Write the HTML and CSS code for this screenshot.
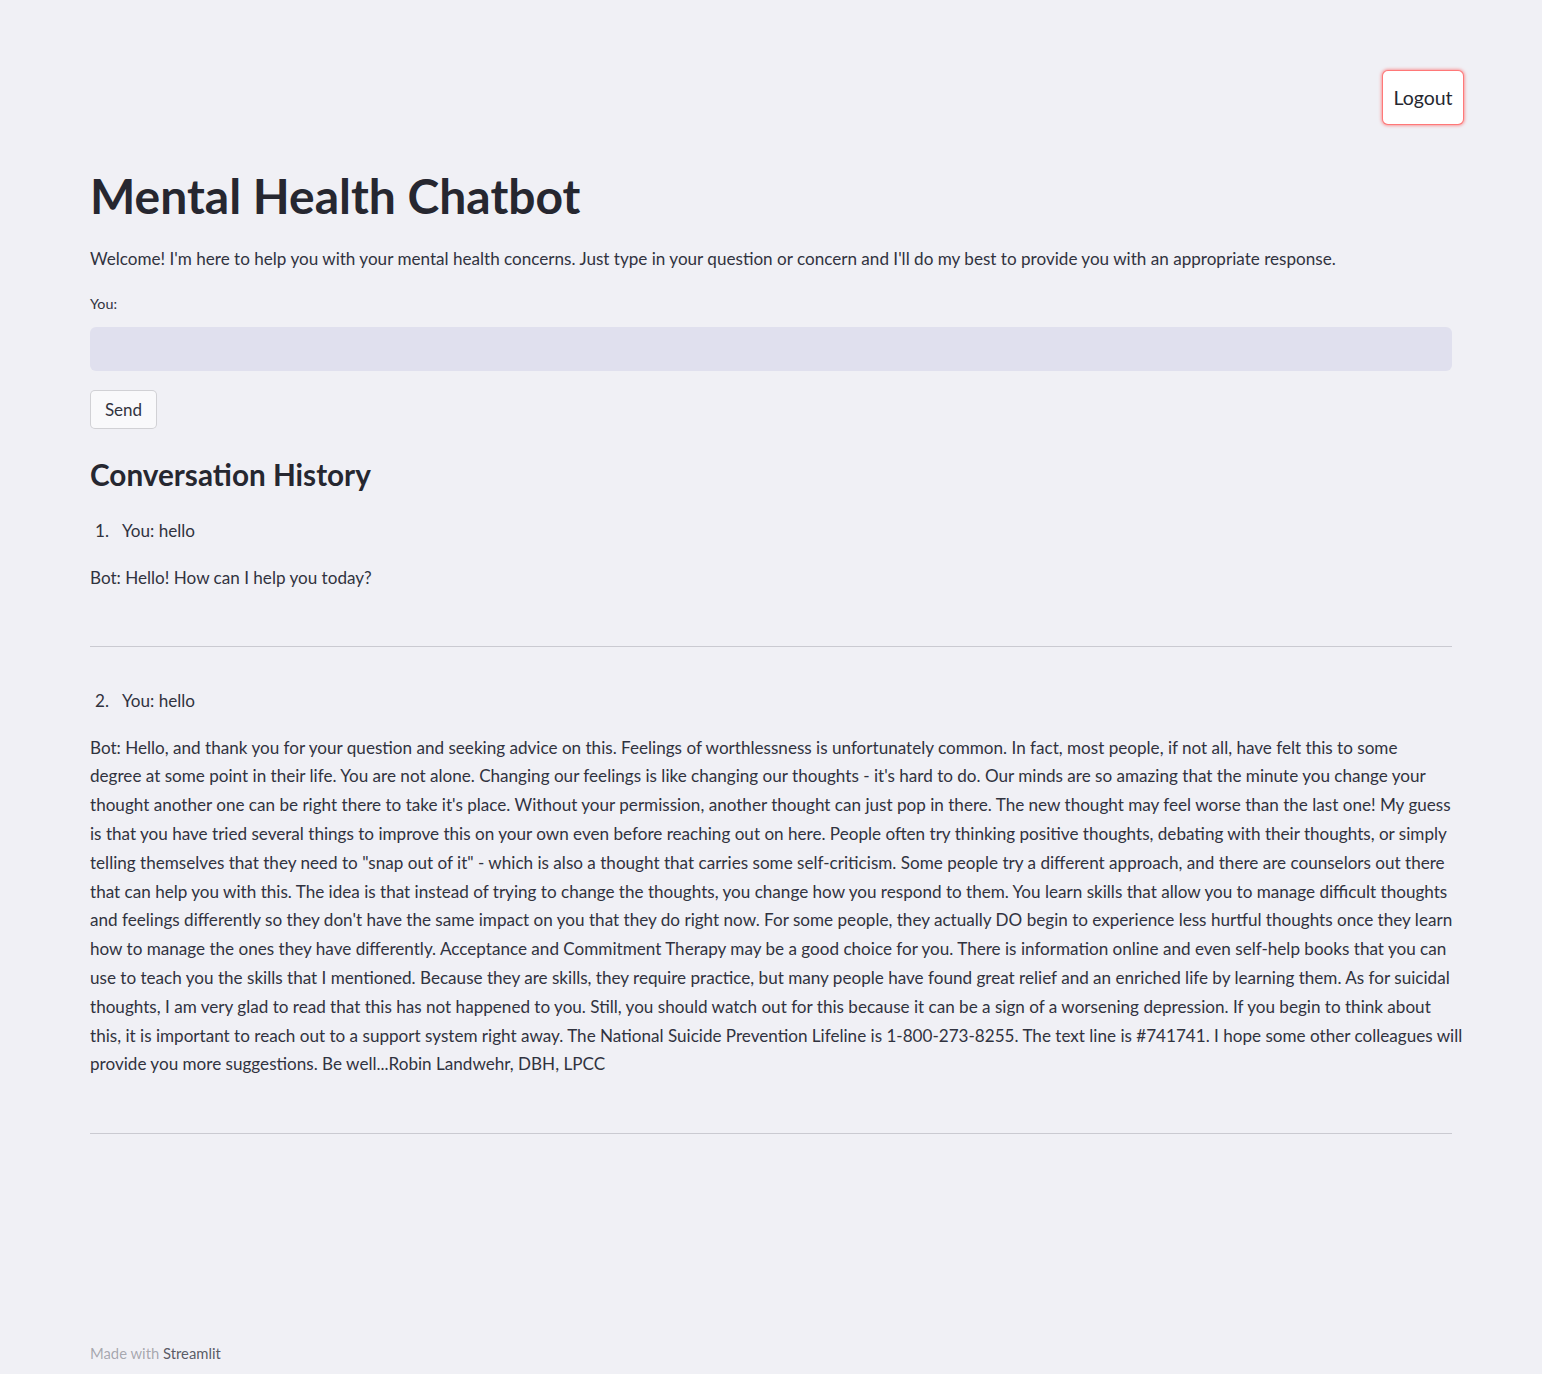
FILE: index.html
```html
<!DOCTYPE html>
<html lang="en">
<head>
<meta charset="utf-8">
<title>Mental Health Chatbot</title>
<link rel="stylesheet" href="styles.css">
</head>
<body>
<div class="app">
  <header class="topbar">
    <button class="logout" type="button">Logout</button>
  </header>
  <main class="main">
    <h1 class="title">Mental Health Chatbot</h1>
    <p class="intro">Welcome! I'm here to help you with your mental health concerns. Just type in your question or concern and I'll do my best to provide you with an appropriate response.</p>
    <label class="field-label" for="msg">You:</label>
    <input class="field" id="msg" type="text">
    <button class="send" type="button">Send</button>
    <h3 class="section">Conversation History</h3>

    <section class="turn">
      <ol class="turn-list"><li value="1">You: hello</li></ol>
      <p class="bot">Bot: Hello! How can I help you today?</p>
      <hr class="rule">
    </section>

    <section class="turn">
      <ol class="turn-list"><li value="2">You: hello</li></ol>
      <p class="bot long">Bot: Hello, and thank you for your question and seeking advice on this. Feelings of worthlessness is unfortunately common. In fact, most people, if not all, have felt this to some<br>degree at some point in their life. You are not alone. Changing our feelings is like changing our thoughts - it's hard to do. Our minds are so amazing that the minute you change your<br>thought another one can be right there to take it's place. Without your permission, another thought can just pop in there. The new thought may feel worse than the last one! My guess<br>is that you have tried several things to improve this on your own even before reaching out on here. People often try thinking positive thoughts, debating with their thoughts, or simply<br>telling themselves that they need to "snap out of it" - which is also a thought that carries some self-criticism. Some people try a different approach, and there are counselors out there<br>that can help you with this. The idea is that instead of trying to change the thoughts, you change how you respond to them. You learn skills that allow you to manage difficult thoughts<br>and feelings differently so they don't have the same impact on you that they do right now. For some people, they actually DO begin to experience less hurtful thoughts once they learn<br>how to manage the ones they have differently. Acceptance and Commitment Therapy may be a good choice for you. There is information online and even self-help books that you can<br>use to teach you the skills that I mentioned. Because they are skills, they require practice, but many people have found great relief and an enriched life by learning them. As for suicidal<br>thoughts, I am very glad to read that this has not happened to you. Still, you should watch out for this because it can be a sign of a worsening depression. If you begin to think about<br>this, it is important to reach out to a support system right away. The National Suicide Prevention Lifeline is 1-800-273-8255. The text line is #741741. I hope some other colleagues will<br>provide you more suggestions. Be well...Robin Landwehr, DBH, LPCC</p>
      <hr class="rule">
    </section>
  </main>
  <footer class="footer"><span class="made">Made with</span> <span class="brand">Streamlit</span></footer>
</div>
</body>
</html>
```
FILE: styles.css
```css
html, body {
  margin: 0;
  padding: 0;
}
body {
  background: #f0f0f5;
  color: #31333f;
  font-family: "Lato", "Noto Sans", sans-serif;
  font-size: 17.1px;
  line-height: 28.8px;
}
.app {
  min-height: 1374px;
  display: flex;
  flex-direction: column;
}
.topbar {
  display: flex;
  justify-content: flex-end;
  padding: 70px 78px 0 0;
}
.logout {
  width: 82px;
  height: 55px;
  background: #ffffff;
  border: 1px solid rgba(255, 75, 75, 0.75);
  border-radius: 6px;
  box-shadow: 0 0 3px 1px rgba(255, 75, 75, 0.5);
  font-family: inherit;
  font-size: 19.5px;
  color: #262730;
  padding: 0;
}
.main {
  flex: 1;
  padding: 0 90px;
  display: flex;
  flex-direction: column;
  align-items: flex-start;
}
.title {
  margin: 42px 0 0;
  font-size: 48px;
  line-height: 57.6px;
  font-weight: 700;
  color: #262730;
}
.intro {
  margin: 20px 0 0;
}
.field-label {
  margin-top: 20px;
  font-size: 14.3px;
  line-height: 22px;
}
.field {
  box-sizing: border-box;
  align-self: stretch;
  margin: 12px 0 0;
  height: 44px;
  border: none;
  border-radius: 6px;
  background: #e0e0ee;
  padding: 0 14px;
  font-family: inherit;
  font-size: 17px;
  color: #31333f;
}
.send {
  margin-top: 19px;
  width: 67px;
  height: 39px;
  background: #f9f9fb;
  border: 1px solid rgba(49, 51, 63, 0.2);
  border-radius: 5px;
  font-family: inherit;
  font-size: 17px;
  color: #31333f;
  padding: 0;
}
.section {
  margin: 29px 0 0;
  font-size: 29.7px;
  line-height: 34.8px;
  font-weight: 700;
  color: #262730;
}
.turn {
  align-self: stretch;
}
.turn-list {
  list-style: none;
  margin: 24px 0 0;
  padding: 0;
}
.turn + .turn .turn-list {
  margin-top: 40px;
}
.turn-list li::before {
  content: attr(value) ".";
  display: inline-block;
  box-sizing: border-box;
  width: 32px;
  padding-left: 5px;
}
.bot {
  margin: 18px 0 0;
}
.long {
  white-space: nowrap;
}
.rule {
  margin: 53px 0 0;
  border: none;
  height: 1px;
  background: rgba(49, 51, 63, 0.2);
}
.turn + .turn .rule {
  margin-top: 54px;
}
.footer {
  padding: 0 90px 10px;
  font-size: 14.8px;
  line-height: 22px;
  color: rgba(49, 51, 63, 0.4);
}
.brand {
  color: rgba(49, 51, 63, 0.8);
}
```
